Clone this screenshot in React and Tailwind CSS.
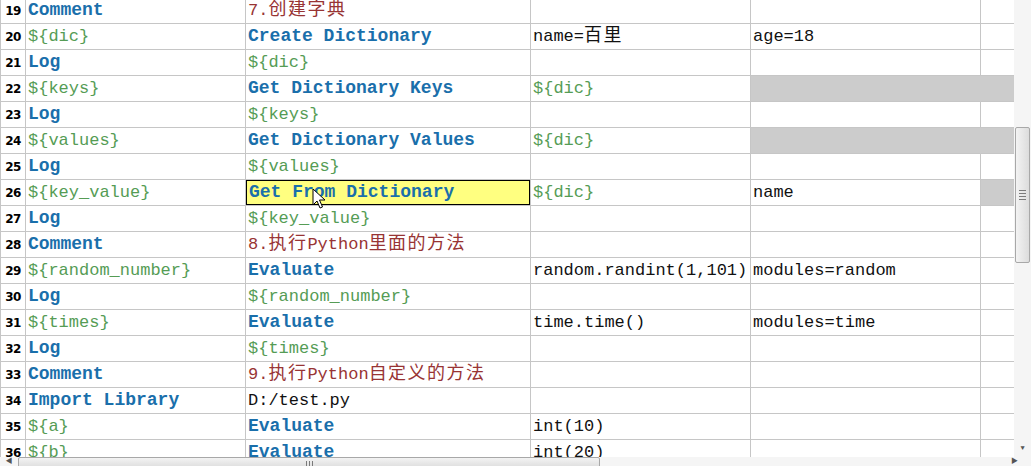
import React from "react";

const K = "kw";
const V = "var";
const C = "cmt";
const T = "txt";

const rows = [
  { n: 19, cells: [[K, "Comment"], [C, "7.", "创建字典"]] },
  { n: 20, cells: [[V, "${dic}"], [K, "Create Dictionary"], [T, "name=", "百里"], [T, "age=18"]] },
  { n: 21, cells: [[K, "Log"], [V, "${dic}"]] },
  { n: 22, cells: [[V, "${keys}"], [K, "Get Dictionary Keys"], [V, "${dic}"]], gray: "wide" },
  { n: 23, cells: [[K, "Log"], [V, "${keys}"]] },
  { n: 24, cells: [[V, "${values}"], [K, "Get Dictionary Values"], [V, "${dic}"]], gray: "wide" },
  { n: 25, cells: [[K, "Log"], [V, "${values}"]] },
  { n: 26, cells: [[V, "${key_value}"], [K, "Get From Dictionary"], [V, "${dic}"], [T, "name"]], gray: "last", selected: true },
  { n: 27, cells: [[K, "Log"], [V, "${key_value}"]] },
  { n: 28, cells: [[K, "Comment"], [C, "8.", "执行", "Python", "里面的方法"]] },
  { n: 29, cells: [[V, "${random_number}"], [K, "Evaluate"], [T, "random.randint(1,101)"], [T, "modules=random"]] },
  { n: 30, cells: [[K, "Log"], [V, "${random_number}"]] },
  { n: 31, cells: [[V, "${times}"], [K, "Evaluate"], [T, "time.time()"], [T, "modules=time"]] },
  { n: 32, cells: [[K, "Log"], [V, "${times}"]] },
  { n: 33, cells: [[K, "Comment"], [C, "9.", "执行", "Python", "自定义的方法"]] },
  { n: 34, cells: [[K, "Import Library"], [T, "D:/test.py"]] },
  { n: 35, cells: [[V, "${a}"], [K, "Evaluate"], [T, "int(10)"]] },
  { n: 36, cells: [[V, "${b}"], [K, "Evaluate"], [T, "int(20)"]] },
];

const colorOf = {
  kw: "text-[#1a6fab] font-bold text-[18px]",
  var: "text-[#559c55] text-[17px]",
  cmt: "text-[#983434] text-[17px]",
  txt: "text-[#111111] text-[17px]",
};

const isCjk = (s) => /[\u4e00-\u9fff]/.test(s);

const CellText = ({ cell }) => {
  if (!cell) return null;
  const [kind, ...parts] = cell;
  return (
    <span className={`whitespace-nowrap ${colorOf[kind]}`}>
      {parts.map((p, i) =>
        isCjk(p) ? (
          <span key={i} className="text-[18px] tracking-[1.5px]">
            {p}
          </span>
        ) : (
          <span key={i}>{p}</span>
        )
      )}
    </span>
  );
};

const widths = ["w-[220px]", "w-[285px]", "w-[220px]", "w-[230px]", "w-[34px]"];

const Cursor = () => (
  <svg width="14" height="22" viewBox="0 0 14 22" className="absolute left-[66px] top-[10px]">
    <path d="M1 1 L1 17 L5 13 L8 20 L10.5 19 L7.5 12 L13 12 Z" fill="white" stroke="black" strokeWidth="1" strokeLinejoin="round" />
  </svg>
);

const Row = ({ row }) => (
  <div className="flex h-[26px]">
    <div className="w-[26px] shrink-0 h-full border-l border-r border-b border-[#c6c6c6] flex items-center justify-center text-[12px] font-bold text-black [font-family:'DejaVu_Sans',sans-serif] tracking-[-0.5px]">
      {row.n}
    </div>
    {widths.map((w, ci) => {
      const cell = row.cells[ci];
      let bg = "bg-white";
      if (row.gray === "wide" && ci >= 3) bg = "bg-[#cccccc]";
      if (row.gray === "last" && ci === 4) bg = "bg-[#cccccc]";
      const sel = row.selected && ci === 1;
      const noRight = row.gray === "wide" && ci === 3;
      return (
        <div
          key={ci}
          className={`${w} shrink-0 h-full border-b ${noRight ? "border-r border-r-[#cccccc]" : "border-r"} border-[#c6c6c6] ${bg} overflow-hidden relative`}
        >
          {sel ? (
            <div className="absolute -left-[1px] -top-[1px] w-[286px] h-[27px] border-2 border-black bg-[#ffff80] flex items-center pl-[2px]">
              <CellText cell={cell} />
            </div>
          ) : (
            <div className="h-full flex items-center pl-[2px]">
              <CellText cell={cell} />
            </div>
          )}
        </div>
      );
    })}
  </div>
);

const App = () => {
  return (
    <div className="w-[1031px] h-[466px] overflow-hidden bg-white flex flex-col [font-family:'Liberation_Mono','Noto_Sans_CJK_SC',monospace]">
      <div className="flex flex-1 min-h-0">
        <div className="w-[1014px] h-full overflow-hidden">
          <div className="-mt-[2px] relative">
            {rows.map((r) => (
              <Row key={r.n} row={r} />
            ))}
            <div className="absolute left-[246px] top-[180px] pointer-events-none">
              <Cursor />
            </div>
          </div>
        </div>
        {/* vertical scrollbar */}
        <div className="w-[17px] h-full bg-[#f5f5f5] flex flex-col items-center">
          <div className="h-[127px]" />
          <div className="w-[15px] h-[136px] rounded-[2px] border border-[#a8a8a8] bg-gradient-to-r from-[#f3f3f3] to-[#dcdcdc] flex flex-col items-center justify-center gap-[2px]">
            <div className="w-[7px] h-[1px] bg-[#7a7a7a]" />
            <div className="w-[7px] h-[1px] bg-[#7a7a7a]" />
            <div className="w-[7px] h-[1px] bg-[#7a7a7a]" />
            <div className="w-[7px] h-[1px] bg-[#7a7a7a]" />
          </div>
          <div className="flex-1" />
          <div className="h-[18px] flex items-center justify-center text-[#555] text-[7px]">▼</div>
        </div>
      </div>
      {/* horizontal scrollbar */}
      <div className="h-[9px] shrink-0 bg-[#f5f5f5] flex items-start">
        <div className="w-[18px] flex justify-center text-[7px] leading-[9px] text-[#555]">◀</div>
        <div className="w-[582px] h-[12px] border border-[#a8a8a8] rounded-[2px] bg-gradient-to-b from-[#f3f3f3] to-[#dcdcdc] flex justify-center gap-[2px] pt-[3px]">
          <div className="w-[1px] h-[7px] bg-[#7a7a7a]" />
          <div className="w-[1px] h-[7px] bg-[#7a7a7a]" />
          <div className="w-[1px] h-[7px] bg-[#7a7a7a]" />
        </div>
        <div className="flex-1" />
        <div className="w-[20px] text-[7px] leading-[9px] text-[#555]">▶</div>
      </div>
    </div>
  );
};

export default App;
